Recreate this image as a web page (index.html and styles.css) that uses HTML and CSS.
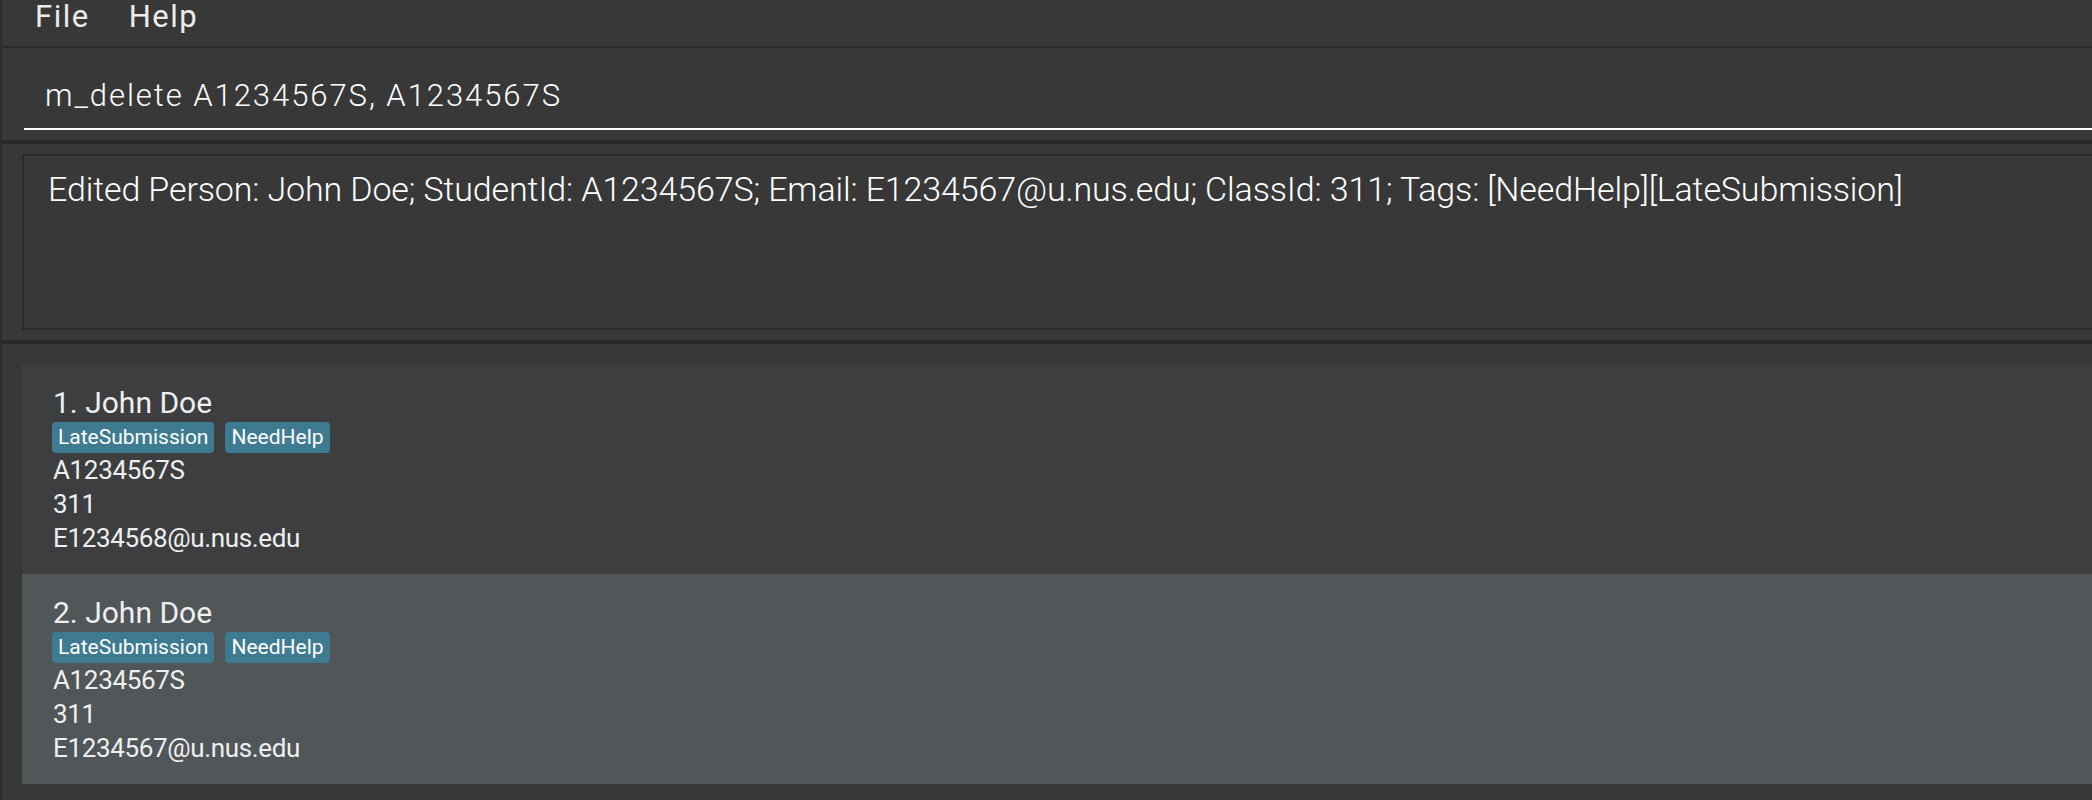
FILE: index.html
```html
<!DOCTYPE html>
<html lang="en">
<head>
<meta charset="utf-8">
<title>Address Book</title>
<link rel="stylesheet" href="styles.css">
</head>
<body>
<div class="window">
  <nav class="menubar">
    <span class="menu-item">File</span>
    <span class="menu-item">Help</span>
  </nav>
  <section class="command-pane">
    <div class="command-field">m_delete A1234567S, A1234567S</div>
  </section>
  <section class="result-pane">
    <div class="result-box">Edited Person: John Doe; StudentId: A1234567S; Email: E1234567@u.nus.edu; ClassId: 311; Tags: [NeedHelp][LateSubmission]</div>
  </section>
  <section class="list-pane">
    <div class="cell cell-even">
      <div class="name">1. John Doe</div>
      <div class="tags"><span class="tag">LateSubmission</span><span class="tag">NeedHelp</span></div>
      <div class="field">A1234567S</div>
      <div class="field">311</div>
      <div class="field">E1234568@u.nus.edu</div>
    </div>
    <div class="cell cell-odd">
      <div class="name">2. John Doe</div>
      <div class="tags"><span class="tag">LateSubmission</span><span class="tag">NeedHelp</span></div>
      <div class="field">A1234567S</div>
      <div class="field">311</div>
      <div class="field">E1234567@u.nus.edu</div>
    </div>
  </section>
</div>
</body>
</html>
```
FILE: styles.css
```css
html, body {
  margin: 0;
  padding: 0;
  background: #383838;
  height: 100%;
  overflow: hidden;
}

.window {
  font-family: Roboto, "Liberation Sans", sans-serif;
  color: #ffffff;
  border-left: 2px solid #2c2c2c;
  height: 800px;
  box-sizing: border-box;
  background: #383838;
}

.menubar {
  height: 46px;
  border-bottom: 2px solid #2b2b2b;
  display: flex;
  gap: 39px;
  padding-left: 33px;
  box-sizing: content-box;
}

.menu-item {
  font-size: 31px;
  line-height: 34px;
  letter-spacing: 1.5px;
  color: #ececec;
}

.command-pane {
  padding: 31px 0 10px 22px;
  border-bottom: 4px solid #2a2a2a;
}

.command-field {
  font-size: 31px;
  font-weight: 300;
  line-height: 34px;
  letter-spacing: 1.95px;
  padding: 0 0 15px 21px;
  border-bottom: 2px solid #ffffff;
  white-space: nowrap;
}

.result-pane {
  padding: 10px 0 10px 20px;
  border-bottom: 4px solid #2a2a2a;
}

.result-box {
  height: 176px;
  box-sizing: border-box;
  border: 2px solid #2b2b2b;
  border-right: none;
  padding: 13px 0 0 24px;
  font-size: 34px;
  font-weight: 300;
  line-height: 40px;
  letter-spacing: -0.13px;
  white-space: nowrap;
}

.list-pane {
  padding: 20px 0 0 20px;
}

.cell {
  height: 210px;
  box-sizing: border-box;
  padding: 18px 0 0 31px;
  color: #efefef;
}

.cell-even {
  background: #3c3e40;
}

.cell-odd {
  background: #515658;
}

.name {
  font-size: 30px;
  line-height: 42px;
}

.tags {
  display: flex;
  gap: 11px;
  margin: -2px 0 0 -1px;
}

.tag {
  background: #3e7b91;
  color: #ffffff;
  font-size: 21px;
  line-height: 27px;
  padding: 2px 6px;
  border-radius: 4px;
}

.field {
  font-size: 26px;
  line-height: 34px;
  letter-spacing: -0.35px;
}
```
